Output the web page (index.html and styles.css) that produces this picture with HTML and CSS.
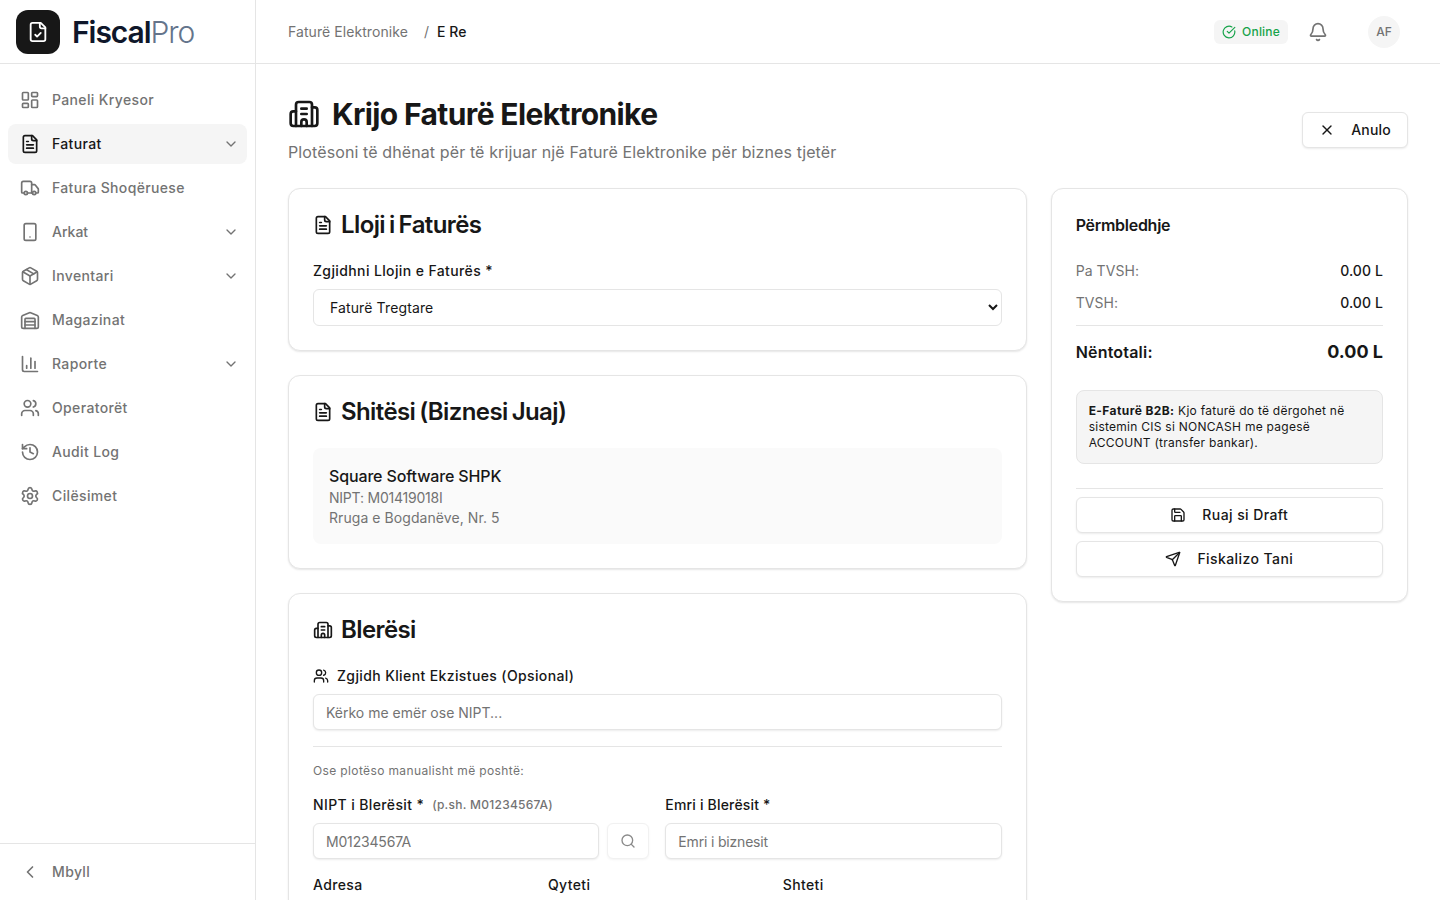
FILE: index.html
```html
<!DOCTYPE html>
<html lang="sq">
<head>
    <meta charset="UTF-8">
    <meta name="viewport" content="width=device-width, initial-scale=1.0">
    <title>FiscalPro - Krijo Faturë Elektronike</title>
    <link rel="stylesheet" href="styles.css">
</head>
<body>
    <!-- shared icons -->
    <svg class="sprite" width="0" height="0">
        <symbol id="i-file" viewBox="0 0 24 24">
            <path d="M15 2H6a2 2 0 0 0-2 2v16a2 2 0 0 0 2 2h12a2 2 0 0 0 2-2V7Z"/>
            <path d="M14 2v4a2 2 0 0 0 2 2h4"/>
            <path d="M10 9H8"/><path d="M16 13H8"/><path d="M16 17H8"/>
        </symbol>
        <symbol id="i-building" viewBox="0 0 24 24">
            <path d="M10 12h4"/><path d="M10 8h4"/>
            <path d="M14 21v-3a2 2 0 0 0-4 0v3"/>
            <path d="M6 10H4a2 2 0 0 0-2 2v7a2 2 0 0 0 2 2h16a2 2 0 0 0 2-2V9a2 2 0 0 0-2-2h-2"/>
            <path d="M6 21V5a2 2 0 0 1 2-2h8a2 2 0 0 1 2 2v16"/>
        </symbol>
        <symbol id="i-users" viewBox="0 0 24 24">
            <path d="M16 21v-2a4 4 0 0 0-4-4H6a4 4 0 0 0-4 4v2"/>
            <circle cx="9" cy="7" r="4"/>
            <path d="M22 21v-2a4 4 0 0 0-3-3.87"/>
            <path d="M16 3.13a4 4 0 0 1 0 7.75"/>
        </symbol>
        <symbol id="i-down" viewBox="0 0 24 24">
            <path d="m6 9 6 6 6-6"/>
        </symbol>
    </svg>

    <div class="app">
        <aside class="sidebar">
            <div class="brand">
                <div class="brand-logo">
                    <svg class="icon icon-22" viewBox="0 0 24 24">
                        <path d="M15 2H6a2 2 0 0 0-2 2v16a2 2 0 0 0 2 2h12a2 2 0 0 0 2-2V7Z"/>
                        <path d="M14 2v4a2 2 0 0 0 2 2h4"/>
                        <path d="m9 15 2 2 4-4"/>
                    </svg>
                </div>
                <div class="brand-name">Fiscal<span>Pro</span></div>
            </div>
            <nav class="nav">
                <a class="nav-item" href="#">
                    <svg class="icon icon-20" viewBox="0 0 24 24">
                        <rect width="7" height="9" x="3" y="3" rx="1"/>
                        <rect width="7" height="5" x="14" y="3" rx="1"/>
                        <rect width="7" height="9" x="14" y="12" rx="1"/>
                        <rect width="7" height="5" x="3" y="16" rx="1"/>
                    </svg>
                    <span>Paneli Kryesor</span>
                </a>
                <a class="nav-item active" href="#">
                    <svg class="icon icon-20"><use href="#i-file"/></svg>
                    <span>Faturat</span>
                    <svg class="icon icon-16 chevron"><use href="#i-down"/></svg>
                </a>
                <a class="nav-item" href="#">
                    <svg class="icon icon-20" viewBox="0 0 24 24">
                        <path d="M14 18V6a2 2 0 0 0-2-2H4a2 2 0 0 0-2 2v11a1 1 0 0 0 1 1h2"/>
                        <path d="M15 18H9"/>
                        <path d="M19 18h2a1 1 0 0 0 1-1v-3.65a1 1 0 0 0-.22-.624l-3.48-4.35A1 1 0 0 0 17.52 8H14"/>
                        <circle cx="17" cy="18" r="2"/><circle cx="7" cy="18" r="2"/>
                    </svg>
                    <span>Fatura Shoqëruese</span>
                </a>
                <a class="nav-item" href="#">
                    <svg class="icon icon-20" viewBox="0 0 24 24">
                        <rect width="14" height="20" x="5" y="2" rx="2"/>
                        <path d="M12 18h.01"/>
                    </svg>
                    <span class="tight">Arkat</span>
                    <svg class="icon icon-16 chevron"><use href="#i-down"/></svg>
                </a>
                <a class="nav-item" href="#">
                    <svg class="icon icon-20" viewBox="0 0 24 24">
                        <path d="M11 21.73a2 2 0 0 0 2 0l7-4A2 2 0 0 0 21 16V8a2 2 0 0 0-1-1.73l-7-4a2 2 0 0 0-2 0l-7 4A2 2 0 0 0 3 8v8a2 2 0 0 0 1 1.73z"/>
                        <path d="M12 22V12"/>
                        <path d="m3.3 7 8.7 5 8.7-5"/>
                        <path d="m7.5 4.27 9 5.15"/>
                    </svg>
                    <span>Inventari</span>
                    <svg class="icon icon-16 chevron"><use href="#i-down"/></svg>
                </a>
                <a class="nav-item" href="#">
                    <svg class="icon icon-20" viewBox="0 0 24 24">
                        <path d="M22 8.35V20a2 2 0 0 1-2 2H4a2 2 0 0 1-2-2V8.35A2 2 0 0 1 3.26 6.5l8-3.2a2 2 0 0 1 1.48 0l8 3.2A2 2 0 0 1 22 8.35Z"/>
                        <path d="M6 18h12"/><path d="M6 14h12"/>
                        <path d="M6 22V11a1 1 0 0 1 1-1h10a1 1 0 0 1 1 1v11"/>
                    </svg>
                    <span>Magazinat</span>
                </a>
                <a class="nav-item" href="#">
                    <svg class="icon icon-20" viewBox="0 0 24 24">
                        <path d="M3 3v16a2 2 0 0 0 2 2h16"/>
                        <path d="M18 17V9"/><path d="M13 17V5"/><path d="M8 17v-3"/>
                    </svg>
                    <span>Raporte</span>
                    <svg class="icon icon-16 chevron"><use href="#i-down"/></svg>
                </a>
                <a class="nav-item" href="#">
                    <svg class="icon icon-20"><use href="#i-users"/></svg>
                    <span>Operatorët</span>
                </a>
                <a class="nav-item" href="#">
                    <svg class="icon icon-20" viewBox="0 0 24 24">
                        <path d="M3 12a9 9 0 1 0 9-9 9.75 9.75 0 0 0-6.74 2.74L3 8"/>
                        <path d="M3 3v5h5"/><path d="M12 7v5l4 2"/>
                    </svg>
                    <span>Audit Log</span>
                </a>
                <a class="nav-item" href="#">
                    <svg class="icon icon-20" viewBox="0 0 24 24">
                        <path d="M9.671 4.136a2.34 2.34 0 0 1 4.659 0 2.34 2.34 0 0 0 3.319 1.915 2.34 2.34 0 0 1 2.33 4.033 2.34 2.34 0 0 0 0 3.831 2.34 2.34 0 0 1-2.33 4.033 2.34 2.34 0 0 0-3.319 1.915 2.34 2.34 0 0 1-4.659 0 2.34 2.34 0 0 0-3.32-1.915 2.34 2.34 0 0 1-2.33-4.033 2.34 2.34 0 0 0 0-3.831A2.34 2.34 0 0 1 6.35 6.051a2.34 2.34 0 0 0 3.319-1.915"/>
                        <circle cx="12" cy="12" r="3"/>
                    </svg>
                    <span>Cilësimet</span>
                </a>
            </nav>
            <div class="sidebar-footer">
                <a class="nav-item" href="#">
                    <svg class="icon icon-20" viewBox="0 0 24 24"><path d="m15 18-6-6 6-6"/></svg>
                    <span>Mbyll</span>
                </a>
            </div>
        </aside>

        <div class="content">
            <header class="topbar">
                <div class="breadcrumb">
                    <a href="#">Faturë Elektronike</a>
                    <span class="slash">/</span>
                    <span class="current">E Re</span>
                </div>
                <div class="topbar-right">
                    <div class="status">
                        <svg class="icon icon-14" viewBox="0 0 24 24">
                            <path d="M21.801 10A10 10 0 1 1 17 3.335"/>
                            <path d="m9 11 3 3L22 4"/>
                        </svg>
                        Online
                    </div>
                    <button class="bell">
                        <svg class="icon icon-20" viewBox="0 0 24 24">
                            <path d="M10.268 21a2 2 0 0 0 3.464 0"/>
                            <path d="M3.262 15.326A1 1 0 0 0 4 17h16a1 1 0 0 0 .74-1.673C19.41 13.956 18 12.499 18 8A6 6 0 0 0 6 8c0 4.499-1.411 5.956-2.738 7.326"/>
                        </svg>
                    </button>
                    <div class="avatar">AF</div>
                </div>
            </header>

            <main class="main">
                <div class="page-header">
                    <div>
                        <h1><svg class="icon icon-32"><use href="#i-building"/></svg>Krijo Faturë Elektronike</h1>
                        <p class="subtitle">Plotësoni të dhënat për të krijuar një Faturë Elektronike për biznes tjetër</p>
                    </div>
                    <button class="btn">
                        <svg class="icon icon-16" viewBox="0 0 24 24"><path d="M18 6 6 18"/><path d="m6 6 12 12"/></svg>
                        Anulo
                    </button>
                </div>

                <div class="layout">
                    <div class="forms">
                        <section class="card">
                            <h2><svg class="icon icon-20"><use href="#i-file"/></svg>Lloji i Faturës</h2>
                            <label class="label" for="type">Zgjidhni Llojin e Faturës *</label>
                            <select class="select" id="type">
                                <option>Faturë Tregtare</option>
                            </select>
                        </section>

                        <section class="card">
                            <h2><svg class="icon icon-20"><use href="#i-file"/></svg>Shitësi (Biznesi Juaj)</h2>
                            <div class="seller">
                                <p class="seller-name">Square Software SHPK</p>
                                <p class="seller-nipt">NIPT: M01419018I</p>
                                <p>Rruga e Bogdanëve, Nr. 5</p>
                            </div>
                        </section>

                        <section class="card">
                            <h2><svg class="icon icon-20"><use href="#i-building"/></svg>Blerësi</h2>
                            <label class="label" for="client"><svg class="icon icon-16"><use href="#i-users"/></svg>Zgjidh Klient Ekzistues (Opsional)</label>
                            <input class="input" type="text" id="client" placeholder="Kërko me emër ose NIPT...">
                            <div class="manual">
                                <p class="hint">Ose plotëso manualisht më poshtë:</p>
                                <div class="row two">
                                    <div>
                                        <label class="label" for="nipt">NIPT i Blerësit * <small>(p.sh. M01234567A)</small></label>
                                        <div class="search-group">
                                            <input class="input" type="text" id="nipt" placeholder="M01234567A">
                                            <button class="btn search-btn" disabled>
                                                <svg class="icon icon-16" viewBox="0 0 24 24"><circle cx="11" cy="11" r="8"/><path d="m21 21-4.3-4.3"/></svg>
                                            </button>
                                        </div>
                                    </div>
                                    <div>
                                        <label class="label label-name" for="name">Emri i Blerësit *</label>
                                        <input class="input" type="text" id="name" placeholder="Emri i biznesit">
                                    </div>
                                </div>
                                <div class="row three">
                                    <div>
                                        <label class="label" for="address">Adresa</label>
                                        <input class="input" type="text" id="address">
                                    </div>
                                    <div>
                                        <label class="label" for="city">Qyteti</label>
                                        <input class="input" type="text" id="city">
                                    </div>
                                    <div>
                                        <label class="label" for="country">Shteti</label>
                                        <input class="input" type="text" id="country">
                                    </div>
                                </div>
                            </div>
                        </section>
                    </div>

                    <aside class="card summary">
                        <h3>Përmbledhje</h3>
                        <div class="sum-row"><span>Pa TVSH:</span><b>0.00 L</b></div>
                        <div class="sum-row"><span>TVSH:</span><b>0.00 L</b></div>
                        <div class="total"><span>Nëntotali:</span><b>0.00 L</b></div>
                        <div class="note"><strong>E-Faturë B2B:</strong> Kjo faturë do të dërgohet në sistemin CIS si NONCASH me pagesë ACCOUNT (transfer bankar).</div>
                        <div class="actions">
                            <button class="btn">
                                <svg class="icon icon-16" viewBox="0 0 24 24">
                                    <path d="M15.2 3a2 2 0 0 1 1.4.6l3.8 3.8a2 2 0 0 1 .6 1.4V19a2 2 0 0 1-2 2H5a2 2 0 0 1-2-2V5a2 2 0 0 1 2-2z"/>
                                    <path d="M17 21v-7a1 1 0 0 0-1-1H8a1 1 0 0 0-1 1v7"/>
                                    <path d="M7 3v4a1 1 0 0 0 1 1h7"/>
                                </svg>
                                Ruaj si Draft
                            </button>
                            <button class="btn">
                                <svg class="icon icon-16" viewBox="0 0 24 24">
                                    <path d="M14.536 21.686a.5.5 0 0 0 .937-.024l6.5-19a.496.496 0 0 0-.635-.635l-19 6.5a.5.5 0 0 0-.024.937l7.93 3.18a2 2 0 0 1 1.112 1.11z"/>
                                    <path d="m21.854 2.147-10.94 10.939"/>
                                </svg>
                                Fiskalizo Tani
                            </button>
                        </div>
                    </aside>
                </div>
            </main>
        </div>
    </div>
</body>
</html>
```
FILE: styles.css
```css
* {
    box-sizing: border-box;
    margin: 0;
    padding: 0;
}
body {
    font-family: Inter, "Liberation Sans", sans-serif;
    font-size: 14px;
    line-height: 20px;
    letter-spacing: 0.07px;
    color: #171717;
    background: #fff;
}
a {
    color: inherit;
    text-decoration: none;
}
button, input, select {
    font: inherit;
    letter-spacing: inherit;
    color: inherit;
}
.sprite {
    display: none;
}
.icon {
    flex-shrink: 0;
    fill: none;
    stroke: currentColor;
    stroke-width: 2;
    stroke-linecap: round;
    stroke-linejoin: round;
}
.icon-14 { width: 14px; height: 14px; }
.icon-16 { width: 16px; height: 16px; }
.icon-20 { width: 20px; height: 20px; }
.icon-22 { width: 22px; height: 22px; }
.icon-32 { width: 32px; height: 32px; }

.app {
    display: flex;
    height: 100vh;
    overflow: hidden;
}

/* sidebar */
.sidebar {
    display: flex;
    flex-direction: column;
    width: 256px;
    flex-shrink: 0;
    border-right: 1px solid #e5e5e5;
}
.brand {
    display: flex;
    align-items: center;
    gap: 12px;
    height: 64px;
    padding: 0 16px;
    border-bottom: 1px solid #e5e5e5;
}
.brand-logo {
    display: flex;
    align-items: center;
    justify-content: center;
    width: 44px;
    height: 44px;
    border-radius: 12px;
    background: #171717;
    color: #fff;
}
.brand-name {
    font-size: 30px;
    line-height: 36px;
    font-weight: 600;
    letter-spacing: -1.05px;
    color: #0f172a;
}
.brand-name span {
    font-weight: 300;
    color: #64748b;
}
.nav {
    display: flex;
    flex-direction: column;
    flex: 1;
    gap: 4px;
    padding: 16px 8px;
}
.nav-item {
    display: flex;
    align-items: center;
    gap: 12px;
    height: 40px;
    padding: 0 8px 0 12px;
    border-radius: 8px;
    font-weight: 500;
    letter-spacing: 0.36px;
    color: #737373;
}
.nav-item.active {
    background: #f5f5f5;
    color: #171717;
}
.nav-item .tight {
    letter-spacing: 0;
}
.nav-item .chevron {
    margin-left: auto;
    color: #737373;
}
.sidebar-footer {
    padding: 8px;
    border-top: 1px solid #e5e5e5;
}

/* top bar */
.content {
    flex: 1;
    min-width: 0;
}
.topbar {
    display: flex;
    align-items: center;
    justify-content: space-between;
    height: 64px;
    padding: 0 40px 0 32px;
    border-bottom: 1px solid #e5e5e5;
}
.breadcrumb {
    display: flex;
    color: #737373;
}
.slash {
    margin: 0 8px 0 16px;
}
.current {
    font-weight: 500;
    color: #171717;
}
.topbar-right {
    display: flex;
    align-items: center;
}
.status {
    display: flex;
    align-items: center;
    gap: 6px;
    height: 24px;
    padding: 0 8px;
    border-radius: 6px;
    background: #f5f5f5;
    color: #16a34a;
    font-size: 12px;
    font-weight: 500;
    letter-spacing: 0.2px;
}
.bell {
    display: flex;
    align-items: center;
    justify-content: center;
    width: 36px;
    height: 36px;
    margin: 0 32px 0 12px;
    border: none;
    background: none;
    color: #737373;
}
.avatar {
    width: 32px;
    height: 32px;
    border-radius: 50%;
    background: #f5f5f5;
    color: #737373;
    font-size: 12px;
    line-height: 32px;
    font-weight: 500;
    text-align: center;
}

/* page */
.main {
    padding: 32px;
}
.page-header {
    display: flex;
    align-items: center;
    justify-content: space-between;
    margin-bottom: 24px;
}
h1 {
    display: flex;
    align-items: center;
    gap: 12px;
    font-size: 30px;
    line-height: 36px;
    font-weight: 700;
    letter-spacing: -0.62px;
}
.subtitle {
    margin-top: 8px;
    font-size: 16px;
    line-height: 24px;
    letter-spacing: 0.11px;
    color: #737373;
}
.btn {
    display: flex;
    align-items: center;
    justify-content: center;
    gap: 16px;
    height: 36px;
    padding: 0 16px;
    border: 1px solid #e5e5e5;
    border-radius: 6px;
    background: #fff;
    box-shadow: 0 1px 2px rgba(0, 0, 0, 0.08);
    font-weight: 500;
    letter-spacing: 0.2px;
}
.layout {
    display: grid;
    grid-template-columns: repeat(3, 1fr);
    gap: 24px;
    align-items: start;
}
.forms {
    grid-column: span 2;
    display: flex;
    flex-direction: column;
    gap: 24px;
}
.card {
    padding: 24px;
    border: 1px solid #e5e5e5;
    border-radius: 12px;
    background: #fff;
    box-shadow: 0 1px 2px rgba(0, 0, 0, 0.1);
}
h2 {
    display: flex;
    align-items: center;
    gap: 8px;
    margin-bottom: 24px;
    font-size: 24px;
    line-height: 24px;
    font-weight: 600;
    letter-spacing: -0.6px;
    word-spacing: -1.5px;
}
.label {
    display: flex;
    align-items: center;
    gap: 8px;
    margin-bottom: 8px;
    font-weight: 500;
    letter-spacing: 0.38px;
}
.label small {
    font-size: 12px;
    letter-spacing: 0.27px;
    color: #737373;
}
.label-name {
    letter-spacing: 0.18px;
}
.select, .input {
    display: block;
    width: 100%;
    min-width: 0;
    height: 36px;
    padding: 0 12px;
    border: 1px solid #e5e5e5;
    border-radius: 6px;
    background: #fff;
}
.select {
    height: 37px;
    letter-spacing: 0.12px;
}
.input {
    box-shadow: 0 1px 2px rgba(0, 0, 0, 0.08);
    letter-spacing: 0;
}
.input::placeholder {
    color: #737373;
}
.row .input {
    letter-spacing: -0.18px;
}
.seller {
    padding: 16px;
    border-radius: 8px;
    background: #fafafa;
    color: #737373;
}
.seller-name {
    font-size: 16px;
    line-height: 24px;
    font-weight: 500;
    letter-spacing: -0.14px;
    color: #171717;
}
.seller-nipt {
    letter-spacing: -0.22px;
}
.manual {
    margin-top: 16px;
    padding-top: 16px;
    border-top: 1px solid #e5e5e5;
}
.hint {
    font-size: 12px;
    line-height: 16px;
    letter-spacing: 0.37px;
    color: #737373;
}
.row {
    display: grid;
    gap: 16px;
    margin-top: 16px;
}
.two {
    grid-template-columns: 1fr 1fr;
}
.three {
    grid-template-columns: 1fr 1fr 1fr;
}
.search-group {
    display: flex;
    gap: 8px;
}
.search-btn {
    width: 42px;
    flex-shrink: 0;
    padding: 0;
    opacity: 0.5;
}

/* summary */
h3 {
    margin-bottom: 24px;
    font-size: 16px;
    line-height: 24px;
    font-weight: 600;
    letter-spacing: -0.28px;
}
.sum-row {
    display: flex;
    justify-content: space-between;
    margin-bottom: 12px;
    color: #737373;
}
.sum-row b {
    font-weight: 500;
    letter-spacing: 0.1px;
    color: #171717;
}
.total {
    display: flex;
    align-items: center;
    justify-content: space-between;
    padding-top: 12px;
    border-top: 1px solid #e5e5e5;
    font-size: 16px;
    line-height: 28px;
    font-weight: 600;
    letter-spacing: 0.2px;
}
.total b {
    font-size: 18px;
    font-weight: 700;
    letter-spacing: 0;
}
.note {
    margin: 24px 0;
    padding: 12px;
    border: 1px solid #e5e5e5;
    border-radius: 8px;
    background: #f5f5f5;
    font-size: 12px;
    line-height: 16px;
    letter-spacing: 0.26px;
}
.note strong {
    letter-spacing: 0.4px;
}
.actions {
    display: flex;
    flex-direction: column;
    gap: 8px;
    padding-top: 8px;
    border-top: 1px solid #e5e5e5;
}
.actions .btn {
    letter-spacing: 0.42px;
}
```
